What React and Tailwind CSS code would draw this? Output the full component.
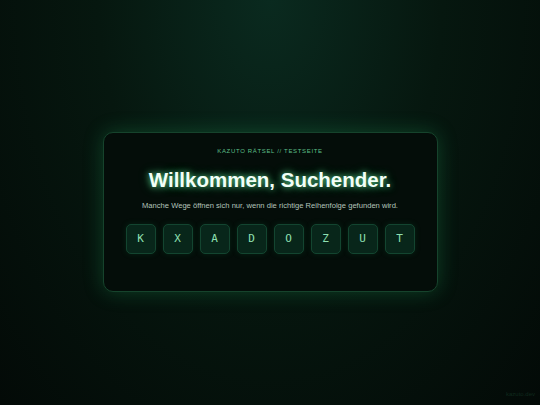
const letters = ['K', 'X', 'A', 'D', 'O', 'Z', 'U', 'T'];

export default function App() {
  return (
    <div
      className="relative min-h-[405px] w-full overflow-hidden bg-[radial-gradient(ellipse_at_50%_0%,#0a2a1f_0%,#06170f_45%,#030a07_100%)] pt-[132px]"
      style={{ fontFamily: '"Liberation Sans", Arial, sans-serif' }}
    >
      <div className="mx-auto w-[335px] rounded-[10px] border border-[#16432c] bg-[#040d09] pt-[14px] pb-[37px] shadow-[0_0_20px_rgba(30,160,90,0.32)]">
        <p className="text-center text-[6px] leading-[8px] tracking-[0.11em] text-[#5cbf88]">
          KAZUTO RÄTSEL // TESTSEITE
        </p>
        <h1 className="mt-[12px] text-center text-[20.5px] font-bold leading-[26px] text-[#f2fff7] [text-shadow:0_0_6px_rgba(110,255,170,0.75),0_0_12px_rgba(60,220,130,0.4)]">
          Willkommen, Suchender.
        </h1>
        <p className="mt-[8px] text-center text-[7.6px] leading-[10px] text-[#b3c4bb]">
          Manche Wege öffnen sich nur, wenn die richtige Reihenfolge gefunden wird.
        </p>
        <div className="mt-[13px] flex justify-center gap-[7px]">
          {letters.map((l, i) => (
            <div
              key={i}
              className="flex h-[30px] w-[30px] items-center justify-center rounded-[5px] border border-[#134530] bg-[#08261a] text-[11px] text-[#8fe0b2] shadow-[0_0_6px_rgba(30,160,90,0.15)]"
              style={{ fontFamily: '"DejaVu Sans Mono", "Liberation Mono", monospace' }}
            >
              {l}
            </div>
          ))}
        </div>
      </div>
      <span className="absolute bottom-[6px] right-[5px] text-[6px] text-[#0f2a1d]">kazuto.dev</span>
    </div>
  );
}
